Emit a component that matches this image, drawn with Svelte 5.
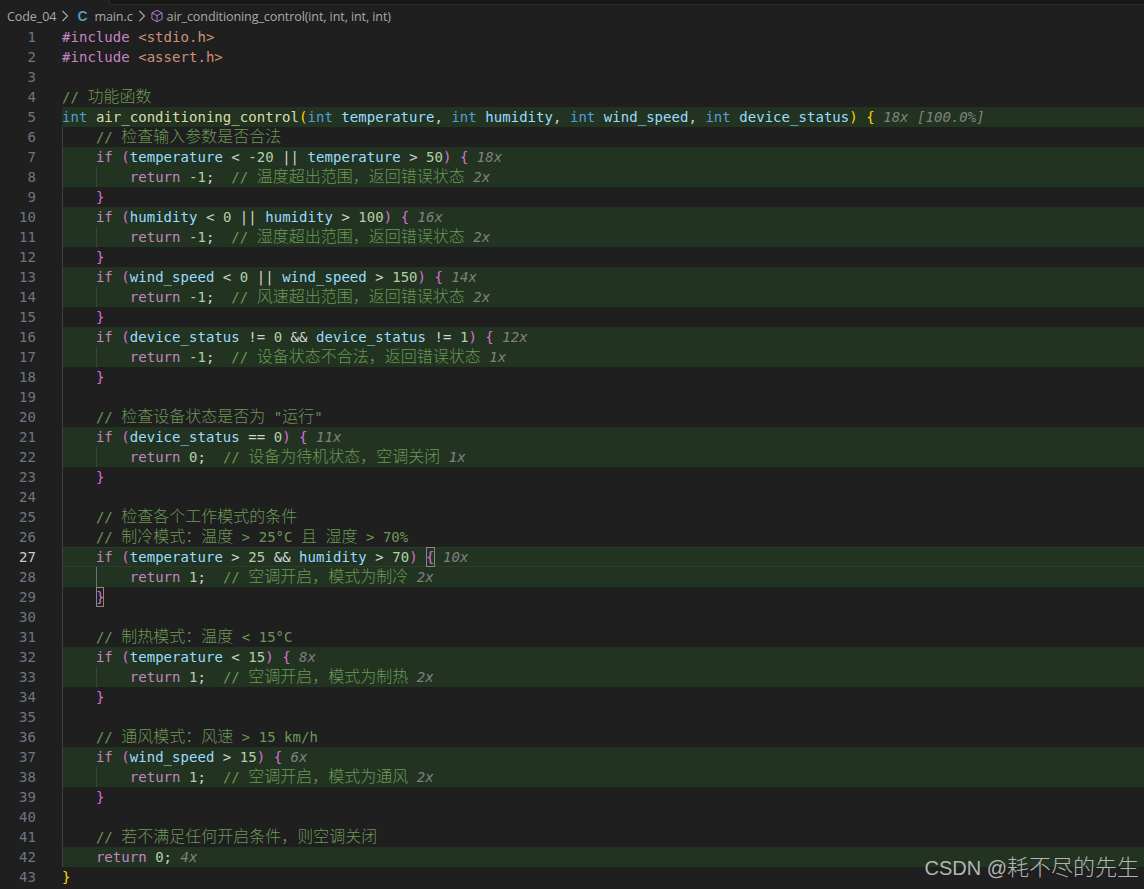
<script>
  const src = [
    '#include <stdio.h>',
    '#include <assert.h>',
    '',
    '// 功能函数',
    'int air_conditioning_control(int temperature, int humidity, int wind_speed, int device_status) {§18x [100.0%]',
    '    // 检查输入参数是否合法',
    '    if (temperature < -20 || temperature > 50) {§18x',
    '        return -1;  // 温度超出范围，返回错误状态§2x',
    '    }',
    '    if (humidity < 0 || humidity > 100) {§16x',
    '        return -1;  // 湿度超出范围，返回错误状态§2x',
    '    }',
    '    if (wind_speed < 0 || wind_speed > 150) {§14x',
    '        return -1;  // 风速超出范围，返回错误状态§2x',
    '    }',
    '    if (device_status != 0 && device_status != 1) {§12x',
    '        return -1;  // 设备状态不合法，返回错误状态§1x',
    '    }',
    '',
    '    // 检查设备状态是否为 "运行"',
    '    if (device_status == 0) {§11x',
    '        return 0;  // 设备为待机状态，空调关闭§1x',
    '    }',
    '',
    '    // 检查各个工作模式的条件',
    '    // 制冷模式：温度 > 25°C 且 湿度 > 70%',
    '    if (temperature > 25 && humidity > 70) {§10x',
    '        return 1;  // 空调开启，模式为制冷§2x',
    '    }',
    '',
    '    // 制热模式：温度 < 15°C',
    '    if (temperature < 15) {§8x',
    '        return 1;  // 空调开启，模式为制热§2x',
    '    }',
    '',
    '    // 通风模式：风速 > 15 km/h',
    '    if (wind_speed > 15) {§6x',
    '        return 1;  // 空调开启，模式为通风§2x',
    '    }',
    '',
    '    // 若不满足任何开启条件，则空调关闭',
    '    return 0;§4x',
    '}'
  ];

  const inner = [8, 11, 14, 17, 22, 28, 33, 38];
  const boxed = { 27: '{', 29: '}' };
  const re = /(\/\/.*$)|(#include)|(<[a-z]+\.h>)|\b(if|return)\b|\b(int)\b|(air_conditioning_control)|([A-Za-z_]\w*)|(\d+)|([(){}])|(.)/g;
  const bracketColours = ['b0', 'b1', 'b2'];
  let depth = 0;

  function splitCjk(text, cls) {
    return text
      .split(/([\u3000-\u9fff\uff00-\uffef]+)/)
      .filter(Boolean)
      .map((t) => ({ t, c: cls + (/[\u3000-\u9fff\uff00-\uffef]/.test(t) ? ' cjk' : '') }));
  }

  function tokenize(line, n) {
    const [code, cov] = line.split('§');
    const out = [];
    for (const m of code.matchAll(re)) {
      if (m[1]) out.push(...splitCjk(m[1], 'com'));
      else if (m[2]) out.push({ t: m[2], c: 'kw' });
      else if (m[3]) out.push({ t: m[3], c: 'str' });
      else if (m[4]) out.push({ t: m[4], c: 'kw' });
      else if (m[5]) out.push({ t: m[5], c: 'ty' });
      else if (m[6]) out.push({ t: m[6], c: 'fn' });
      else if (m[7]) out.push({ t: m[7], c: 'var' });
      else if (m[8]) out.push({ t: m[8], c: 'num' });
      else if (m[9]) {
        const open = '({'.includes(m[9]);
        if (!open) depth--;
        const box = boxed[n] === m[9];
        out.push({ t: m[9], c: bracketColours[depth] + (box ? ' box' : '') });
        if (open) depth++;
      } else out.push({ t: m[10], c: '-' === m[10] ? 'num' : 'op' });
    }
    return { n, toks: out, cov, hit: !!cov };
  }

  const lines = src.map((l, i) => tokenize(l, i + 1));
</script>

<div class="page">
  <div class="topstrip"><div class="tab"></div></div>
  <nav class="crumbs">
    <span>Code_04</span>
    <svg class="chev" viewBox="0 0 16 16"><path d="M5.5 3l5 5-5 5" /></svg>
    <span class="c-icon">C</span>
    <span>main.c</span>
    <svg class="chev" viewBox="0 0 16 16"><path d="M5.5 3l5 5-5 5" /></svg>
    <svg class="cube" viewBox="0 0 16 16"><path d="M8 1.5l5.8 3v7L8 14.5l-5.8-3v-7zM2.2 4.5L8 7.5l5.8-3M8 7.5v7" /></svg>
    <span>air_conditioning_control(int, int, int, int)</span>
  </nav>
  <div class="editor">
    {#each lines as l}
      <div class="line">
        <span class="ln" class:cur={l.n === 27}>{l.n}</span>
        <div class="code" class:hit={l.hit} class:curline={l.n === 27}>{#if l.n >= 6 && l.n <= 42}<i class="guide g1"></i>{/if}{#if inner.includes(l.n)}<i class="guide g2" class:active={l.n === 28}></i>{/if}{#each l.toks as t}<span class={t.c}>{t.t}</span>{/each}{#if l.cov}<span class="cov">{' ' + l.cov}</span>{/if}</div>
      </div>
    {/each}
  </div>
  <div class="mark">CSDN @<span class="mark-cjk">耗不尽的先生</span></div>
</div>

<style>
  :global(body) {
    margin: 0;
    background: #1f1f1f;
  }
  .page {
    position: relative;
    width: 1144px;
    height: 889px;
    overflow: hidden;
    background: #1f1f1f;
  }
  .topstrip {
    height: 5px;
    display: flex;
    justify-content: flex-end;
  }
  .tab {
    width: 1034px;
    height: 4px;
    background: #181818;
    border-left: 1px solid #2b2b2b;
    border-bottom: 1px solid #2b2b2b;
    box-sizing: content-box;
  }
  .crumbs {
    height: 22px;
    display: flex;
    align-items: center;
    padding-left: 7px;
    font: 12.6px "Open Sans", "Noto Sans", sans-serif;
    letter-spacing: -0.12px;
    color: #a9a9a9;
    white-space: pre;
  }
  .chev {
    width: 16px;
    height: 16px;
    margin: 0 -1px 0 1px;
    fill: none;
    stroke: #a9a9a9;
    stroke-width: 1.1;
  }
  .c-icon {
    font: bold 14px "Liberation Sans", sans-serif;
    color: #519aba;
    margin: 0 7px 0 5px;
  }
  .cube {
    width: 14px;
    height: 14px;
    margin: 0 3px 0 1px;
    fill: none;
    stroke: #b180d7;
    stroke-width: 1.1;
  }
  .editor {
    font: 14px/20px "DejaVu Sans Mono", monospace;
    letter-spacing: 0.035px;
    white-space: pre;
  }
  .line {
    display: flex;
    height: 20px;
  }
  .ln {
    width: 36px;
    flex: none;
    text-align: right;
    color: #6e7681;
  }
  .ln.cur {
    color: #cccccc;
  }
  .code {
    position: relative;
    flex: 1;
    margin-left: 26px;
    color: #d4d4d4;
  }
  .hit {
    background: #223322;
  }
  .curline {
    box-shadow: inset 0 1px 0 #2c3c2c, inset 0 -1px 0 #2c3c2c;
  }
  .guide {
    position: absolute;
    top: 0;
    bottom: 0;
    width: 1px;
    background: #404040;
  }
  .g1 {
    left: 0;
  }
  .g2 {
    left: 34px;
  }
  .g2.active {
    background: #707070;
  }
  .cjk {
    font: 300 16px/0 "Noto Sans CJK SC", sans-serif;
    letter-spacing: 0;
  }
  .com { color: #6a9955; }
  .kw { color: #c586c0; }
  .str { color: #ce9178; }
  .ty { color: #569cd6; }
  .fn { color: #dcdcaa; }
  .var { color: #9cdcfe; }
  .num { color: #b5cea8; }
  .op { color: #d4d4d4; }
  .b0 { color: #ffd700; }
  .b1 { color: #da70d6; }
  .b2 { color: #179fff; }
  .box {
    display: inline-block;
    height: 20px;
    box-shadow: inset 0 0 0 1px #888888;
  }
  .cov {
    color: #808080;
    font-style: italic;
  }
  .mark {
    position: absolute;
    right: 5px;
    bottom: 9px;
    font: 20px/24px "Liberation Sans", sans-serif;
    color: #b4b4b4;
  }
  .mark-cjk {
    font: 300 22px/24px "Noto Sans CJK SC", sans-serif;
  }
</style>
